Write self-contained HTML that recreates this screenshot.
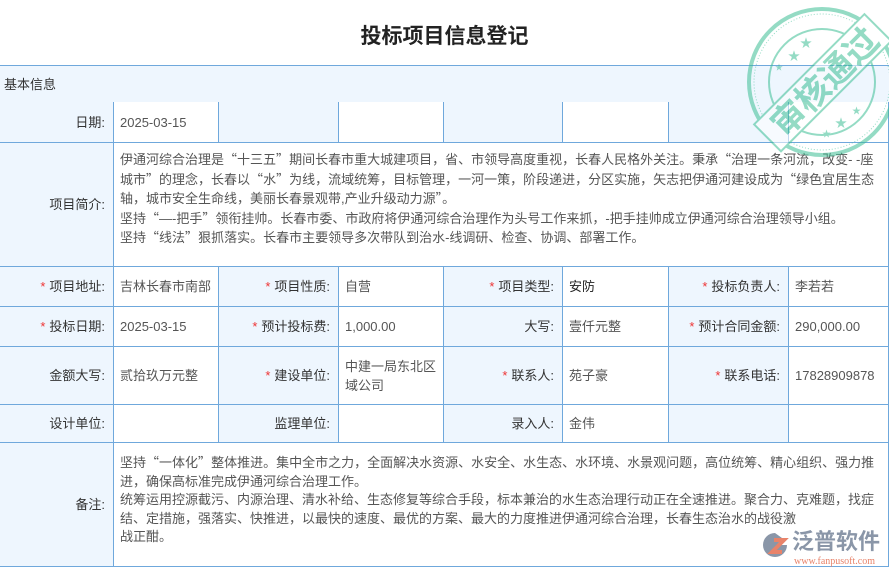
<!DOCTYPE html>
<html><head><meta charset="utf-8"><style>
*{margin:0;padding:0;box-sizing:border-box}
body{width:889px;height:573px;background:#fff;font-family:"Liberation Sans","Noto Sans CJK SC",sans-serif;font-size:13px;color:#555;position:relative;overflow:hidden}
.t{position:absolute;left:0;top:20px;width:889px;text-align:center;font-size:21px;font-weight:bold;color:#222;font-family:"Noto Sans CJK SC",sans-serif}
.c{position:absolute;border-right:1px solid #6fa8dc;border-bottom:1px solid #6fa8dc;display:flex;align-items:center;padding:0 6px;line-height:19px}
.l{background:#eef6fe;justify-content:flex-end;color:#333;padding-right:8px}
.v{background:#fff;color:#555}
.s{color:#e33;margin-right:4px}
.q{font-family:"Noto Sans CJK SC",sans-serif}
</style></head><body>
<div class="t">投标项目信息登记</div>
<div style="position:absolute;left:0;top:65px;width:889px;height:38px;background:#eef6fe;border-top:1px solid #6fa8dc;border-bottom:1px solid #6fa8dc;padding:8px 4px;color:#333">基本信息</div>
<div id="g"></div>
<script>
var X=[0,114,219,339,444,563,669,789,889];
var R=[[102,143],[267,307],[307,347],[347,405],[405,443]];
var d=[
["日期:","2025-03-15","","","","","",""],
["*项目地址:","吉林长春市南部","*项目性质:","自营","*项目类型:","<span style='color:#222'>安防</span>","*投标负责人:","李若若"],
["*投标日期:","2025-03-15","*预计投标费:","1,000.00","大写:","壹仟元整","*预计合同金额:","290,000.00"],
["金额大写:","贰拾玖万元整","*建设单位:","中建一局东北区<br>域公司","*联系人:","苑子豪","*联系电话:","17828909878"],
["设计单位:","","监理单位:","","录入人:","金伟","",""]];
var h="";
for(var r=0;r<5;r++)for(var i=0;i<8;i++){var t=d[r][i];if(t[0]=="*")t="<span class=s>*</span>"+t.slice(1);
h+='<div class="c '+(i%2?'v':'l')+'" style="left:'+X[i]+'px;top:'+R[r][0]+'px;width:'+(X[i+1]-X[i])+'px;height:'+(R[r][1]-R[r][0])+'px">'+t+'</div>';}
document.getElementById('g').innerHTML=h;
</script>
<div class="c l" style="left:0;top:143px;width:114px;height:124px">项目简介:</div>
<div class="c v" style="left:114px;top:143px;width:775px;height:124px;padding-top:7px;display:block;line-height:18.5px">伊通河综合治理是<span class=q>“</span>十三五<span class=q>”</span>期间长春市重大城建项目，省、市领导高度重视，长春人民格外关注。秉承<span class=q>“</span>治理一条河流，改变- -座城市<span class=q>”</span>的理念，长春以<span class=q>“</span>水<span class=q>”</span>为线，流域统筹，目标管理，一河一策，阶段递进，分区实施，矢志把伊通河建设成为<span class=q>“</span>绿色宜居生态轴，城市安全生命线，美丽长春景观带,产业升级动力源<span class=q>”</span>。<br>坚持<span class=q>“</span>—-把手<span class=q>”</span>领衔挂帅。长春市委、市政府将伊通河综合治理作为头号工作来抓，-把手挂帅成立伊通河综合治理领导小组。<br>坚持<span class=q>“</span>线法<span class=q>”</span>狠抓落实。长春市主要领导多次带队到治水-线调研、检查、协调、部署工作。</div>
<div class="c l" style="left:0;top:443px;width:114px;height:124px">备注:</div>
<div class="c v" style="left:114px;top:443px;width:775px;height:124px;display:block;padding-top:10px;line-height:18.5px">坚持<span class=q>“</span>一体化<span class=q>”</span>整体推进。集中全市之力，全面解决水资源、水安全、水生态、水环境、水景观问题，高位统筹、精心组织、强力推进，确保高标准完成伊通河综合治理工作。<br>统筹运用控源截污、内源治理、清水补给、生态修复等综合手段，标本兼治的水生态治理行动正在全速推进。聚合力、克难题，找症结、定措施，强落实、快推进，以最快的速度、最优的方案、最大的力度推进伊通河综合治理，长春生态治水的战役激<br>战正酣。</div>
<div style="position:absolute;left:760px;top:528px;width:130px;height:40px;white-space:nowrap">
<svg width="30" height="30" viewBox="0 0 30 30" style="position:absolute;left:0;top:2px"><path d="M15 3 A12 12 0 1 0 27 15 L17 15 L22 8 Z" fill="#8a96a8"/><path d="M14 10 L24 10 L12 22 L22 22" stroke="#e8836a" stroke-width="4" fill="none"/></svg>
<div style="position:absolute;left:32px;top:-2px;font-size:22px;font-weight:bold;color:#8a96a8;font-family:'Noto Sans CJK SC',sans-serif;line-height:28px">泛普软件</div>
<div style="position:absolute;left:34px;top:28px;font-size:10px;color:#e8836a;font-family:'Liberation Serif',serif">www.fanpusoft.com</div>
</div>
<svg style="position:absolute;left:738px;top:0" width="160" height="170" viewBox="0 0 160 170" opacity="0.55">
<g fill="none" stroke="#3dbf95"><circle cx="84" cy="82" r="73" stroke-width="4"/><circle cx="84" cy="82" r="68" stroke-width="1" stroke-dasharray="1 2"/><circle cx="84" cy="82" r="53" stroke-width="2"/></g>
<g transform="rotate(-45 84 82)"><rect x="6" y="64" width="156" height="38" fill="#fff" stroke="#3dbf95" stroke-width="2"/><text x="86" y="96" text-anchor="middle" font-size="34" font-weight="bold" fill="#3dbf95" font-family="'Noto Sans CJK SC',sans-serif">审核通过</text></g>
<g fill="#3dbf95" font-size="12"><text x="50" y="60">★</text><text x="62" y="47">★</text><text x="37" y="70" font-size="8">★</text><text x="97" y="127">★</text><text x="84" y="137" font-size="9">★</text><text x="114" y="114" font-size="9">★</text></g>
</svg>
</body></html>
